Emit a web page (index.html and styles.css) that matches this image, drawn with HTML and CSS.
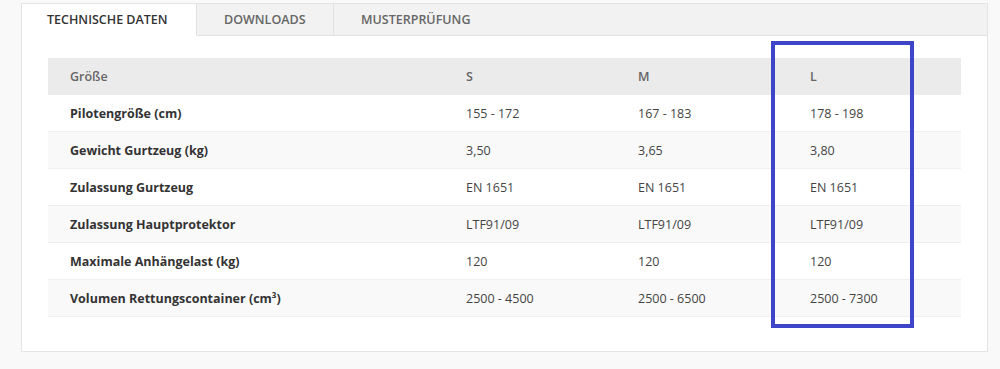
FILE: index.html
```html
<!DOCTYPE html>
<html lang="de">
<head>
<meta charset="utf-8">
<title>Technische Daten</title>
<link rel="stylesheet" href="styles.css">
</head>
<body>
<div class="wrap">
  <div class="tabs">
    <div class="tab active">TECHNISCHE DATEN</div>
    <div class="tab">DOWNLOADS</div>
    <div class="tab">MUSTERPRÜFUNG</div>
    <div class="tab-fill"></div>
  </div>
  <div class="panel">
    <table class="spec">
      <colgroup>
        <col class="c-label"><col class="c-size"><col class="c-size"><col class="c-last">
      </colgroup>
      <thead>
        <tr><th>Größe</th><th>S</th><th>M</th><th>L</th></tr>
      </thead>
      <tbody>
        <tr><td class="lbl">Pilotengröße (cm)</td><td>155 - 172</td><td>167 - 183</td><td>178 - 198</td></tr>
        <tr><td class="lbl">Gewicht Gurtzeug (kg)</td><td>3,50</td><td>3,65</td><td>3,80</td></tr>
        <tr><td class="lbl">Zulassung Gurtzeug</td><td>EN 1651</td><td>EN 1651</td><td>EN 1651</td></tr>
        <tr><td class="lbl">Zulassung Hauptprotektor</td><td>LTF91/09</td><td>LTF91/09</td><td>LTF91/09</td></tr>
        <tr><td class="lbl">Maximale Anhängelast (kg)</td><td>120</td><td>120</td><td>120</td></tr>
        <tr><td class="lbl">Volumen Rettungscontainer (cm³)</td><td>2500 - 4500</td><td>2500 - 6500</td><td>2500 - 7300</td></tr>
      </tbody>
    </table>
  </div>
  <div class="highlight"></div>
</div>
</body>
</html>
```
FILE: styles.css
```css
html, body {
  margin: 0;
  padding: 0;
}
body {
  background: #f9f9f9;
  font-family: "Open Sans", "Liberation Sans", sans-serif;
  color: #444;
}
.wrap {
  position: relative;
  width: 967px;
  margin: 3px 0 0 21px;
}
.tabs {
  display: flex;
  height: 33px;
  box-sizing: border-box;
  background: #f2f2f2;
  border: 1px solid #e4e4e4;
  border-bottom: none;
}
.tab {
  display: flex;
  align-items: center;
  flex: 0 0 auto;
  box-sizing: border-box;
  padding: 0 0 0 27px;
  font-size: 12.5px;
  font-weight: 600;
  color: #666;
  border-right: 1px solid #e2e2e2;
  border-bottom: 1px solid #e2e2e2;
}
.tab.active {
  background: #fff;
  color: #333;
  border-bottom-color: #fff;
  width: 175px;
  padding-left: 25px;
}
.tab:nth-child(2) { width: 137px; }
.tab:nth-child(3) { border-right: none; }
.tab-fill {
  flex: 1;
  border-bottom: 1px solid #e2e2e2;
}
.panel {
  background: #fff;
  border: 1px solid #e4e4e4;
  border-top: none;
  padding: 22px 26px 34px 26px;
}
.spec {
  width: 913px;
  border-collapse: collapse;
  font-size: 12.5px;
}
.c-label { width: 396px; }
.c-size { width: 172px; }
.c-last { width: 173px; }
.spec th {
  background: #ebebeb;
  color: #666;
  font-weight: 600;
  text-align: left;
  height: 37px;
  padding: 0 22px;
}
.spec td {
  height: 36px;
  padding: 0 22px;
  border-bottom: 1px solid #efefef;
  color: #444;
}
.spec tbody tr:nth-child(odd) td { background: #fff; }
.spec tbody tr:nth-child(even) td { background: #f9f9f9; }
.spec td.lbl {
  font-weight: 700;
  color: #333;
}
.highlight {
  position: absolute;
  left: 750px;
  top: 38px;
  width: 143px;
  height: 287px;
  box-sizing: border-box;
  border: 4px solid #3f45c8;
}
```
